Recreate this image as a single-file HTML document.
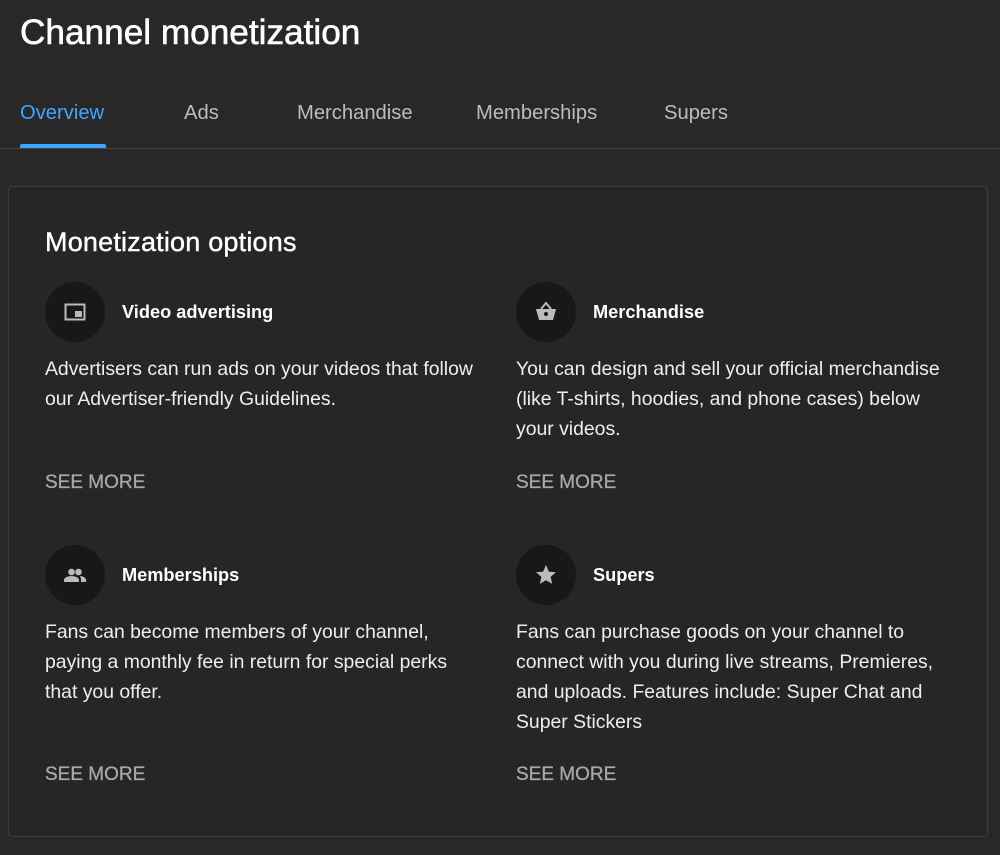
<!DOCTYPE html>
<html><head><style>
body{margin:0;width:1000px;height:855px;background:#282828;font-family:"Liberation Sans",sans-serif;color:#fff;position:relative;overflow:hidden}
.a{position:absolute;white-space:nowrap}
.title{left:20px;top:13px;font-size:35.2px;-webkit-text-stroke:0.6px #fff}
.tab{top:102px;font-size:20.2px;color:#bdbdbd}
.card{position:absolute;left:8px;top:186px;width:980px;height:651px;border:1px solid #3d3d3d;border-radius:4px;background:#262626;box-sizing:border-box}
.h{left:45px;top:227px;font-size:27px;letter-spacing:0.2px;-webkit-text-stroke:0.4px #fff}
.ic{position:absolute;width:60px;height:60px;border-radius:50%;background:#181818}
.ic svg{position:absolute;left:18px;top:18px}
.lbl{font-size:18.2px;font-weight:bold}
.body{position:absolute;font-size:19.4px;line-height:30px;color:#eee;width:440px}
.sm{font-size:19px;color:#a8a8a8;-webkit-text-stroke:0.3px #a8a8a8}
</style></head><body>
<div class="a title">Channel monetization</div>
<div class="a tab" style="left:20px;color:#3ea6ff">Overview</div>
<div class="a tab" style="left:184px">Ads</div>
<div class="a tab" style="left:297px">Merchandise</div>
<div class="a tab" style="left:476px">Memberships</div>
<div class="a tab" style="left:664px">Supers</div>
<div class="a" style="left:20px;top:144px;width:86px;height:4px;background:#3ea6ff;border-radius:2px 2px 0 0"></div>
<div class="a" style="left:0;top:148px;width:1000px;height:1px;background:#444"></div>
<div class="card"></div>
<div class="a h">Monetization options</div>

<div class="ic" style="left:45px;top:282px"><svg width="24" height="24" viewBox="0 0 24 24"><rect x="2.5" y="4.5" width="19" height="15" fill="none" stroke="#bbb" stroke-width="2"/><rect x="12" y="11" width="7" height="6" fill="#bbb"/></svg></div>
<div class="a lbl" style="left:122px;top:302px">Video advertising</div>
<div class="body" style="left:45px;top:354px">Advertisers can run ads on your videos that follow our Advertiser-friendly Guidelines.</div>
<div class="a sm" style="left:45px;top:472px">SEE MORE</div>

<div class="ic" style="left:516px;top:282px"><svg width="24" height="24" viewBox="0 0 24 24"><path d="M7 9l5-6 5 6" fill="none" stroke="#bbb" stroke-width="2"/><path d="M2 9h20l-3 11H5z" fill="#bbb"/><circle cx="12" cy="14" r="2" fill="#181818"/></svg></div>
<div class="a lbl" style="left:593px;top:302px">Merchandise</div>
<div class="body" style="left:516px;top:354px;width:430px">You can design and sell your official merchandise (like T-shirts, hoodies, and phone cases) below your videos.</div>
<div class="a sm" style="left:516px;top:472px">SEE MORE</div>

<div class="ic" style="left:45px;top:545px"><svg width="24" height="24" viewBox="0 0 24 24"><circle cx="8.5" cy="9" r="3.3" fill="#bbb"/><circle cx="15.5" cy="9" r="3.3" fill="#bbb"/><path d="M1 19v-2c0-2.5 4-4 7.5-4s7.5 1.5 7.5 4v2z" fill="#bbb"/><path d="M17 13c3 .3 6 1.6 6 4v2h-5v-2c0-1.5-.5-3-1-4z" fill="#bbb"/></svg></div>
<div class="a lbl" style="left:122px;top:565px">Memberships</div>
<div class="body" style="left:45px;top:617px;width:410px">Fans can become members of your channel, paying a monthly fee in return for special perks that you offer.</div>
<div class="a sm" style="left:45px;top:764px">SEE MORE</div>

<div class="ic" style="left:516px;top:545px"><svg width="24" height="24" viewBox="0 0 24 24"><path d="M12 2l2.9 6.6 7.1.6-5.4 4.7 1.6 7-6.2-3.7-6.2 3.7 1.6-7L2 9.2l7.1-.6z" fill="#bbb"/></svg></div>
<div class="a lbl" style="left:593px;top:565px">Supers</div>
<div class="body" style="left:516px;top:617px;width:420px">Fans can purchase goods on your channel to connect with you during live streams, Premieres, and uploads. Features include: Super Chat and Super Stickers</div>
<div class="a sm" style="left:516px;top:764px">SEE MORE</div>
</body></html>
